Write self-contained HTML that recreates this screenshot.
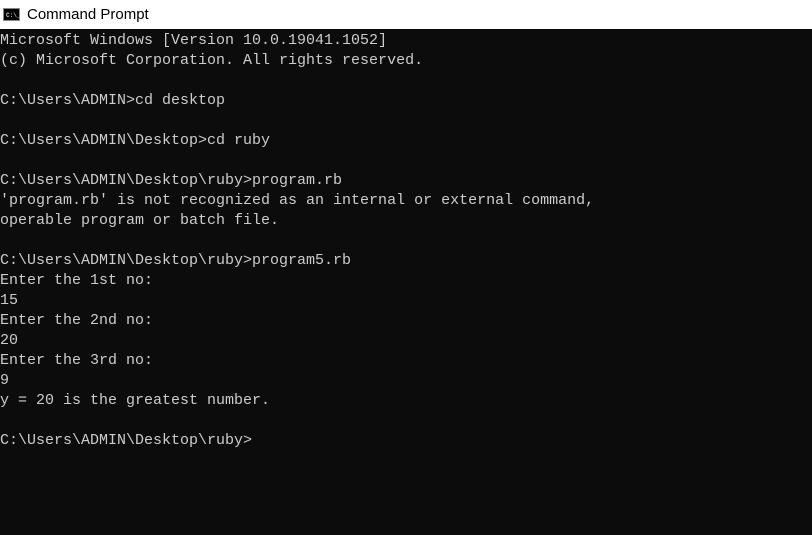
<!DOCTYPE html>
<html><head><style>
html,body{margin:0;padding:0;width:812px;height:535px;overflow:hidden;background:#0c0c0c}
.t{position:absolute;left:0;top:0;width:812px;height:29px;background:#fff}
.t span{position:absolute;left:27px;top:6px;font:15px "Liberation Sans",sans-serif;color:#000}
.ic{position:absolute;left:3px;top:8px;width:17px;height:13px;background:#000;border:1px solid #888;box-sizing:border-box}
.ic i{position:absolute;left:2px;top:3px;font:bold 6px "Liberation Mono",monospace;color:#ccc;font-style:normal}
pre{position:absolute;left:0;top:31px;margin:0;font:15px/20px "Liberation Mono",monospace;color:#cccccc}
</style></head><body>
<div class="t"><div class="ic"><i>C:\_</i></div><span>Command Prompt</span></div>
<pre>Microsoft Windows [Version 10.0.19041.1052]
(c) Microsoft Corporation. All rights reserved.

C:\Users\ADMIN>cd desktop

C:\Users\ADMIN\Desktop>cd ruby

C:\Users\ADMIN\Desktop\ruby>program.rb
'program.rb' is not recognized as an internal or external command,
operable program or batch file.

C:\Users\ADMIN\Desktop\ruby>program5.rb
Enter the 1st no:
15
Enter the 2nd no:
20
Enter the 3rd no:
9
y = 20 is the greatest number.

C:\Users\ADMIN\Desktop\ruby></pre>
</body></html>
